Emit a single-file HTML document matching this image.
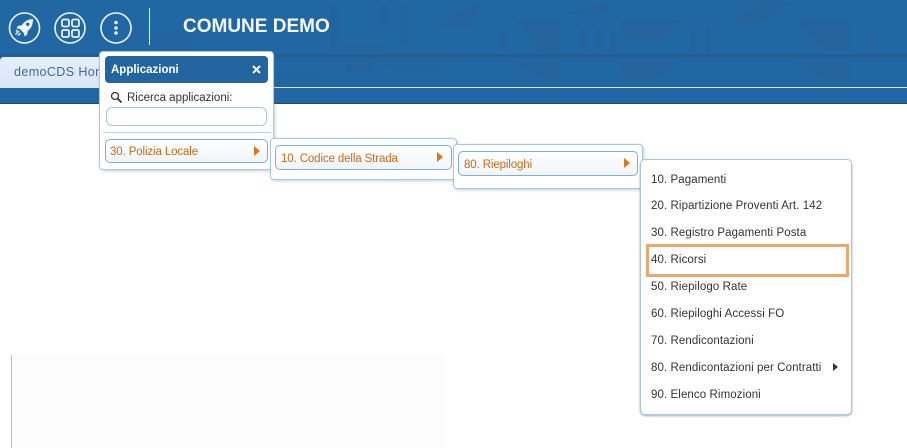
<!DOCTYPE html>
<html>
<head>
<meta charset="utf-8">
<style>
html,body{margin:0;padding:0;background:#fff}
body{width:907px;height:448px;position:relative;overflow:hidden;font-family:"Liberation Sans",sans-serif;font-size:11.5px;letter-spacing:.09px;color:#333}
.a{position:absolute;box-sizing:border-box}
.panel{background:#fff;border:1px solid #a9c8de;border-radius:4px;box-shadow:1px 1px 3px rgba(90,120,150,.35)}
.item{background:linear-gradient(#fff,#f1f4f7);border:1px solid #7fb0d2;border-radius:5px;color:#c96a17;line-height:24px;padding-left:5px;white-space:nowrap;letter-spacing:-.12px}
.row{position:absolute;left:651px;white-space:nowrap;line-height:16px;color:#333}
.tri{position:absolute;width:0;height:0;border-left:6px solid #d9781f;border-top:5px solid transparent;border-bottom:5px solid transparent}
</style>
</head>
<body>
<!-- header -->
<div class="a" style="left:0;top:0;width:907px;height:104px;background:#2167a3;border-bottom:1px solid #2c4a66"></div>
<svg class="a" style="left:0;top:0" width="907" height="103" viewBox="0 0 907 103">
<g fill="#2b5f94" opacity=".45">
<polygon points="330,45 385,45 385,53 330,53" opacity=".5"/>
<polygon points="435,27 478,2 480,2 470,27"/>
<polygon points="515,20 560,20 560,52 540,52"/>
<polygon points="565,14 610,2 605,14"/>
<polygon points="620,20 680,20 660,40 625,40"/>
<polygon points="730,24 760,2 790,2 760,24"/>
<polygon points="795,20 850,20 850,50 825,50"/>
<polygon points="370,56 470,56 440,72 395,72" opacity=".6"/>
<polygon points="515,62 560,62 560,78 540,78"/>
<polygon points="620,62 680,62 660,78 625,78"/>
<polygon points="795,62 850,62 850,78 825,78"/>
<polygon points="130,30 200,30 190,50 150,50" opacity=".35"/>
<polygon points="345,60 372,60 372,72 345,72"/>
<polygon points="230,70 330,70 320,82 240,82" opacity=".5"/>
</g>
<g fill="#2b5f94" opacity=".3">
<rect x="580" y="28" width="6" height="24"/><rect x="596" y="28" width="6" height="24"/>
<rect x="610" y="28" width="6" height="24"/><rect x="690" y="28" width="6" height="24"/>
<rect x="705" y="28" width="6" height="24"/><rect x="330" y="5" width="8" height="40"/>
<rect x="380" y="5" width="8" height="20"/><rect x="400" y="5" width="8" height="40"/>
<rect x="500" y="30" width="6" height="20"/><rect x="870" y="30" width="6" height="22"/>
</g>
</svg>
<div class="a" style="left:0;top:54px;width:907px;height:1px;background:#2a5a86"></div>
<div class="a" style="left:0;top:55px;width:907px;height:4px;background:linear-gradient(rgba(35,70,105,.3),rgba(35,70,105,0))"></div>
<div class="a" style="left:0;top:87px;width:907px;height:1px;background:#d8e6f1"></div>

<!-- icons -->
<svg class="a" style="left:0;top:0" width="140" height="50" viewBox="0 0 140 50">
<circle cx="24.5" cy="28" r="15" fill="none" stroke="#eef4f9" stroke-width="1.6"/>
<path d="M33 19c-5 .2-8.700 2.400-11.200 6.300l-3.800.5-1.500 2.700 3.200.4 4.300 4.300.4 3.200 2.700-1.500.5-3.800C31.500 28.400 33 24 33 19z" fill="#eef4f9"/>
<path d="M19 31l-3.500 3.500M20.500 33l-2.500 2.500M17.500 30l-1.500 1.500" stroke="#dbe7f1" stroke-width="1.500" fill="none"/>
<circle cx="27.800" cy="24.300" r="1.700" fill="#2167a3"/>
<circle cx="70" cy="28" r="15" fill="none" stroke="#eef4f9" stroke-width="1.600"/>
<g fill="none" stroke="#eef4f9" stroke-width="1.700">
<rect x="62" y="19.500" width="7" height="7" rx="1.500"/><rect x="72" y="19.500" width="7" height="7" rx="1.500"/>
<rect x="62" y="30" width="7" height="7" rx="1.500"/><rect x="72" y="30" width="7" height="7" rx="1.500"/>
</g>
<circle cx="116" cy="28" r="15" fill="none" stroke="#eef4f9" stroke-width="1.600"/>
<circle cx="116" cy="22.500" r="1.800" fill="#e3edf5"/><circle cx="116" cy="28" r="1.800" fill="#e3edf5"/><circle cx="116" cy="33" r="1.800" fill="#e3edf5"/>
</svg>
<div class="a" style="left:149px;top:8px;width:1px;height:37px;background:#e6eff6"></div>
<div class="a" style="left:183px;top:15px;font-size:19px;font-weight:bold;color:#f4f8fb;letter-spacing:0;line-height:24px;white-space:nowrap">COMUNE DEMO</div>

<!-- tab -->
<div class="a" style="left:0;top:57px;width:110px;height:31px;background:linear-gradient(#e6effb,#d8e6f7);border-radius:4px 4px 0 0;color:#3f6c9b;font-size:12.5px;line-height:31px;padding-left:14px;white-space:nowrap;letter-spacing:.4px">demoCDS Home</div>

<!-- bottom faint area -->
<div class="a" style="left:12px;top:355px;width:432px;height:93px;background:#fcfcfc"></div>
<div class="a" style="left:11px;top:355px;width:1px;height:93px;background:#a9c5d6"></div>

<!-- panel 1 -->
<div class="a panel" style="left:99px;top:51px;width:175px;height:119px"></div>
<div class="a" style="left:105px;top:56px;width:163px;height:27px;background:#23659f;border-radius:4px;color:#fff;font-weight:bold;font-size:11.5px;line-height:28px;padding-left:6px;letter-spacing:0">Applicazioni</div>
<svg class="a" style="left:251px;top:64px" width="11" height="11" viewBox="0 0 11 11"><path d="M2 2l7 7M9 2l-7 7" stroke="#fff" stroke-width="2"/></svg>
<svg class="a" style="left:110px;top:91px" width="13" height="13" viewBox="0 0 13 13"><circle cx="5" cy="5" r="3.500" fill="none" stroke="#333" stroke-width="1.300"/><path d="M7.500 7.500l4 4" stroke="#333" stroke-width="1.700"/></svg>
<div class="a" style="left:127px;top:90px;line-height:16px;white-space:nowrap;letter-spacing:0">Ricerca applicazioni:</div>
<div class="a" style="left:106px;top:107px;width:161px;height:19px;border:1px solid #a9c8de;border-radius:6px;background:#fff"></div>
<div class="a" style="left:103px;top:132px;width:168px;height:1px;background:#bcd3e4"></div>
<div class="a item" style="left:105px;top:139px;width:163px;height:24px;padding-left:4px">30. Polizia Locale</div>
<div class="tri" style="left:254px;top:146px"></div>

<!-- panel 2 -->
<div class="a panel" style="left:270px;top:138px;width:187px;height:42px"></div>
<div class="a item" style="left:275px;top:145px;width:177px;height:25px;line-height:26px">10. Codice della Strada</div>
<div class="tri" style="left:437px;top:152px"></div>

<!-- panel 3 -->
<div class="a panel" style="left:453px;top:144px;width:190px;height:45px"></div>
<div class="a item" style="left:458px;top:151px;width:180px;height:25px;line-height:26px">80. Riepiloghi</div>
<div class="tri" style="left:624px;top:158px"></div>

<!-- panel 4 -->
<div class="a panel" style="left:640px;top:159px;width:212px;height:256px;border-radius:5px;box-shadow:0 1px 2px rgba(90,120,150,.6)"></div>
<div class="row" style="top:172px">10. Pagamenti</div>
<div class="row" style="top:198px">20. Ripartizione Proventi Art. 142</div>
<div class="row" style="top:225px">30. Registro Pagamenti Posta</div>
<div class="a" style="left:646px;top:244px;width:203px;height:33px;border:3px solid #e8a96f"></div>
<div class="row" style="top:252px">40. Ricorsi</div>
<div class="row" style="top:279px">50. Riepilogo Rate</div>
<div class="row" style="top:306px">60. Riepiloghi Accessi FO</div>
<div class="row" style="top:333px">70. Rendicontazioni</div>
<div class="row" style="top:360px">80. Rendicontazioni per Contratti</div>
<div class="tri" style="left:833px;top:363px;border-left:5px solid #333;border-top-width:4px;border-bottom-width:4px"></div>
<div class="row" style="top:387px">90. Elenco Rimozioni</div>
</body>
</html>
